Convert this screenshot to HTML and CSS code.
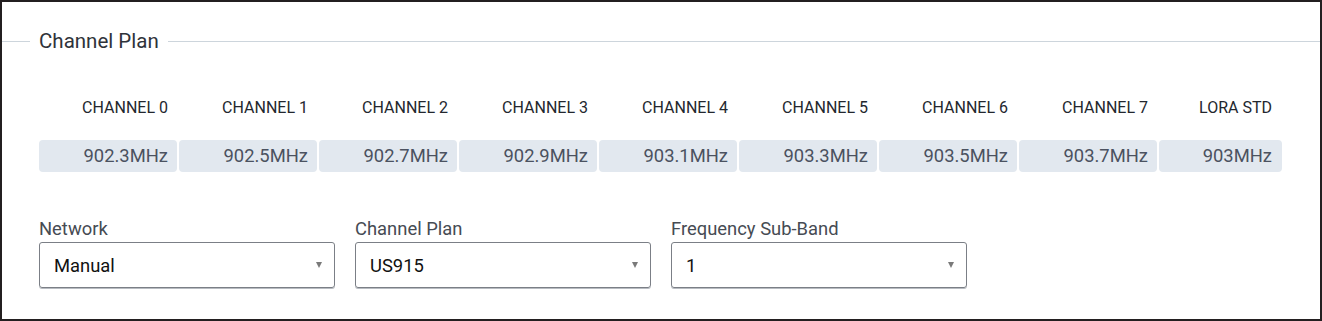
FILE: index.html
```html
<!DOCTYPE html>
<html lang="en">
<head>
    <meta charset="UTF-8">
    <meta name="viewport" content="width=device-width, initial-scale=1.0">
    <title>Channel Plan</title>
    <link rel="stylesheet" href="styles.css">
</head>
<body>
    <div class="panel">
        <div class="section-title"><span>Channel Plan</span></div>

        <div class="channels">
            <div class="ch-head">CHANNEL 0</div>
            <div class="ch-head">CHANNEL 1</div>
            <div class="ch-head">CHANNEL 2</div>
            <div class="ch-head">CHANNEL 3</div>
            <div class="ch-head">CHANNEL 4</div>
            <div class="ch-head">CHANNEL 5</div>
            <div class="ch-head">CHANNEL 6</div>
            <div class="ch-head">CHANNEL 7</div>
            <div class="ch-head">LORA STD</div>

            <div class="ch-freq">902.3MHz</div>
            <div class="ch-freq">902.5MHz</div>
            <div class="ch-freq">902.7MHz</div>
            <div class="ch-freq">902.9MHz</div>
            <div class="ch-freq">903.1MHz</div>
            <div class="ch-freq">903.3MHz</div>
            <div class="ch-freq">903.5MHz</div>
            <div class="ch-freq">903.7MHz</div>
            <div class="ch-freq">903MHz</div>
        </div>

        <div class="fields">
            <div class="field">
                <label>Network</label>
                <div class="select"><span>Manual</span><i class="caret"></i></div>
            </div>
            <div class="field">
                <label>Channel Plan</label>
                <div class="select"><span>US915</span><i class="caret"></i></div>
            </div>
            <div class="field">
                <label>Frequency Sub-Band</label>
                <div class="select"><span>1</span><i class="caret"></i></div>
            </div>
        </div>
    </div>
</body>
</html>
```

FILE: styles.css
```css
html, body {
    margin: 0;
    padding: 0;
    background: #fff;
}
body {
    font-family: Roboto, "Liberation Sans", Arial, sans-serif;
    color: #333;
}
.panel {
    box-sizing: border-box;
    width: 1322px;
    height: 321px;
    border: 2px solid #231f20;
    padding-top: 27px;
}
.section-title {
    display: flex;
    align-items: center;
    font-size: 20.5px;
    color: #2f333a;
    height: 24px;
}
.section-title::before {
    content: "";
    width: 28px;
    border-top: 1px solid #cdd5dc;
}
.section-title::after {
    content: "";
    flex: 1;
    border-top: 1px solid #cdd5dc;
}
.section-title span {
    padding: 0 9px;
}
.channels {
    display: grid;
    grid-template-columns: repeat(8, 138px) 123px;
    column-gap: 2px;
    row-gap: 22px;
    margin: 45px 0 0 37px;
}
.ch-head {
    text-align: right;
    font-size: 16px;
    color: #23272e;
    padding-right: 9px;
    line-height: 20px;
}
.ch-head:nth-child(9) {
    padding-right: 10px;
}
.ch-freq {
    background: #e2e8ef;
    border-radius: 4px;
    height: 32px;
    line-height: 32px;
    text-align: right;
    padding-right: 9px;
    font-size: 18.4px;
    color: #4b5260;
}
.channels .ch-freq:last-child {
    padding-right: 10px;
}
.fields {
    display: flex;
    gap: 20px;
    margin: 46px 0 0 37px;
}
.field {
    width: 296px;
}
.field label {
    display: block;
    font-size: 18.4px;
    color: #464b53;
    line-height: 22px;
    margin-bottom: 2px;
}
.select {
    box-sizing: border-box;
    height: 46px;
    border: 1px solid #7b7f86;
    border-radius: 3px;
    box-shadow: 0 1px 0 #b8bcc2;
    display: flex;
    align-items: center;
    justify-content: space-between;
    padding: 0 12px 0 14px;
    font-size: 18.4px;
    color: #111;
}
.caret {
    width: 0;
    height: 0;
    border-left: 3.5px solid transparent;
    border-right: 3.5px solid transparent;
    border-top: 6px solid #7a7a7a;
}
```
